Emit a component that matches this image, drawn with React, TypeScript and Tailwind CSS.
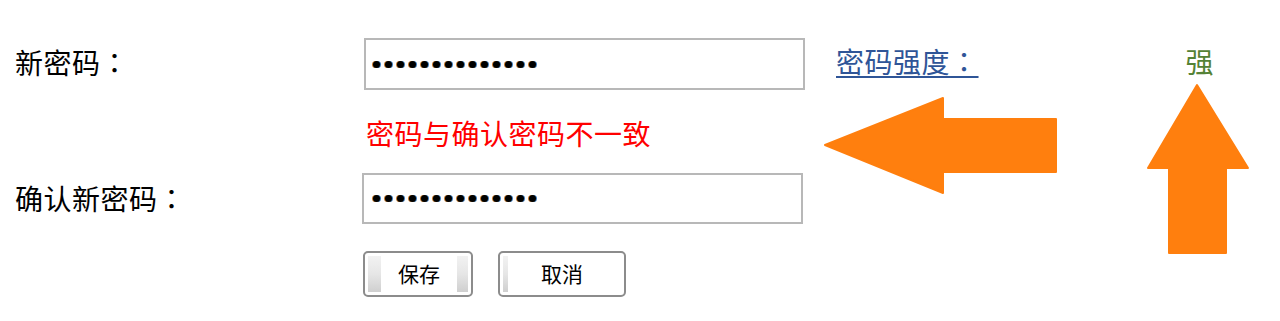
const cjk = "font-['Noto_Sans_CJK_SC',sans-serif]";

function Colon() {
  return <span className="font-['Noto_Sans_CJK_JP',sans-serif]">：</span>;
}

function Strip({ w }: { w: string }) {
  return <div className={`${w} self-stretch my-[3px] bg-gradient-to-b from-[#f2f2f2] via-[#e6e6e6] to-[#cfcfcf]`} />;
}

// 密码框里的圆点
function PasswordBox({ count, className }: { count: number; className: string }) {
  return (
    <div className={`flex items-center gap-[5px] border-2 border-[#b8b8b8] bg-white ${className}`}>
      {Array.from({ length: count }).map((_, i) => (
        <span key={i} className="w-[7px] h-[7px] rounded-full bg-black shadow-[-1px_0_0_#c87a2a,1px_0_0_#3f7fc0]" />
      ))}
    </div>
  );
}

function Arrows() {
  return (
    <svg className="absolute left-0 top-0" width="1280" height="321" viewBox="0 0 1280 321">
      <path
        d="M825 145 L943 98 L943 119 L1056 119 L1056 172 L943 172 L943 193 Z"
        fill="#ff7f0e"
        stroke="#ff7f0e"
        strokeWidth="2"
        strokeLinejoin="round"
      />
      <path
        d="M1197 85 L1248 168 L1226 168 L1226 253 L1169 253 L1169 168 L1148 168 Z"
        fill="#ff7f0e"
        stroke="#ff7f0e"
        strokeWidth="2"
        strokeLinejoin="round"
      />
    </svg>
  );
}

export default function App() {
  return (
    <div className={`relative w-full h-[321px] bg-white overflow-hidden ${cjk}`}>
      {/* 新密码 */}
      <div className="flex items-center h-[52px] mt-[38px]">
        <div className="w-[364px] pl-[15px] text-[28px] tracking-[0.5px] text-black -mt-[4px]">
          新密码<Colon />
        </div>
        <PasswordBox count={14} className="w-[441px] h-[52px] pl-[7px]" />
        <a href="#" className="ml-[31px] -mt-[6px] text-[28px] tracking-[0.5px] text-[#2f5597] underline underline-offset-[3px] decoration-[1.5px]">
          密码强度<Colon />
        </a>
        <span className="ml-[207px] -mt-[6px] text-[28px] text-[#548235]">强</span>
      </div>

      {/* 错误提示 */}
      <div className="mt-[26px] h-[34px] pl-[366px] text-[28px] leading-[34px] tracking-[0.5px] text-[#ff0000]">
        密码与确认密码不一致
      </div>

      {/* 确认新密码 */}
      <div className="flex items-center h-[51px] mt-[23px]">
        <div className="w-[362px] pl-[15px] text-[28px] tracking-[0.5px] text-black -mt-[1px]">
          确认新密码<Colon />
        </div>
        <PasswordBox count={14} className="w-[441px] h-[51px] pl-[9px]" />
      </div>

      {/* 按钮 */}
      <div className="flex gap-[25px] mt-[27px] pl-[363px]">
        <button className="flex items-center w-[110px] h-[46px] border-2 border-[#8c8c8c] rounded-[5px] bg-white px-[3px] text-[21px] text-black">
          <Strip w="w-[13px]" />
          <span className="flex-1 text-center">保存</span>
          <Strip w="w-[11px]" />
        </button>
        <button className="flex items-center w-[128px] h-[46px] border-2 border-[#8c8c8c] rounded-[5px] bg-white px-[3px] text-[21px] text-black">
          <Strip w="w-[5px]" />
          <span className="flex-1 text-center pr-[5px]">取消</span>
        </button>
      </div>

      <Arrows />
    </div>
  );
}
